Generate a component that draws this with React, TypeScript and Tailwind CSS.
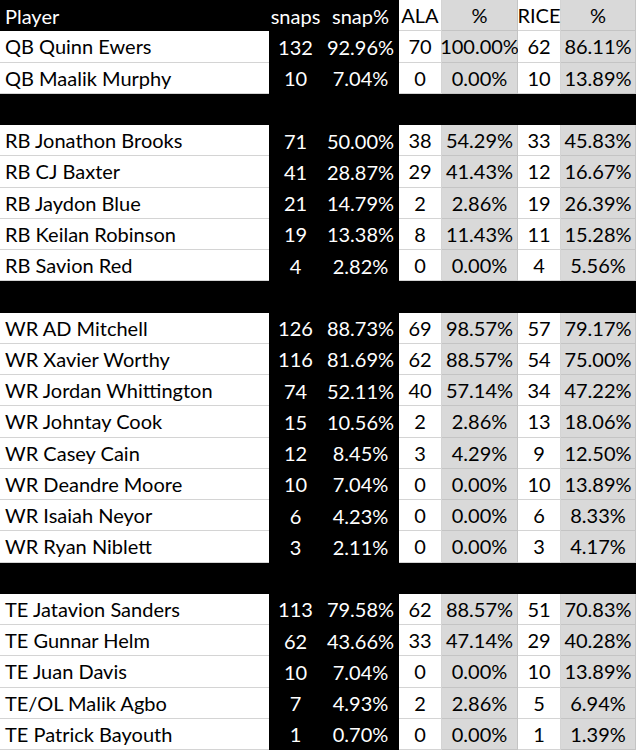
import React from "react";

type Row = [string, number, string, number, string, number, string];

const groups: Row[][] = [
  [
    ["QB Quinn Ewers", 132, "92.96%", 70, "100.00%", 62, "86.11%"],
    ["QB Maalik Murphy", 10, "7.04%", 0, "0.00%", 10, "13.89%"],
  ],
  [
    ["RB Jonathon Brooks", 71, "50.00%", 38, "54.29%", 33, "45.83%"],
    ["RB CJ Baxter", 41, "28.87%", 29, "41.43%", 12, "16.67%"],
    ["RB Jaydon Blue", 21, "14.79%", 2, "2.86%", 19, "26.39%"],
    ["RB Keilan Robinson", 19, "13.38%", 8, "11.43%", 11, "15.28%"],
    ["RB Savion Red", 4, "2.82%", 0, "0.00%", 4, "5.56%"],
  ],
  [
    ["WR AD Mitchell", 126, "88.73%", 69, "98.57%", 57, "79.17%"],
    ["WR Xavier Worthy", 116, "81.69%", 62, "88.57%", 54, "75.00%"],
    ["WR Jordan Whittington", 74, "52.11%", 40, "57.14%", 34, "47.22%"],
    ["WR Johntay Cook", 15, "10.56%", 2, "2.86%", 13, "18.06%"],
    ["WR Casey Cain", 12, "8.45%", 3, "4.29%", 9, "12.50%"],
    ["WR Deandre Moore", 10, "7.04%", 0, "0.00%", 10, "13.89%"],
    ["WR Isaiah Neyor", 6, "4.23%", 0, "0.00%", 6, "8.33%"],
    ["WR Ryan Niblett", 3, "2.11%", 0, "0.00%", 3, "4.17%"],
  ],
  [
    ["TE Jatavion Sanders", 113, "79.58%", 62, "88.57%", 51, "70.83%"],
    ["TE Gunnar Helm", 62, "43.66%", 33, "47.14%", 29, "40.28%"],
    ["TE Juan Davis", 10, "7.04%", 0, "0.00%", 10, "13.89%"],
    ["TE/OL Malik Agbo", 7, "4.93%", 2, "2.86%", 5, "6.94%"],
    ["TE Patrick Bayouth", 1, "0.70%", 0, "0.00%", 1, "1.39%"],
  ],
];

const cols = "grid grid-cols-[269px_53px_77px_43px_76px_43px_75px] h-[31.25px]";
const white = "bg-white text-black border-b border-r border-[#d4d4d4] flex items-center justify-center";
const gray = "bg-[#d9d9d9] text-black border-b border-r border-[#c4c4c4] flex items-center justify-center";
const dark = "text-white flex items-center justify-center";

function PlayerRow({ row }: { row: Row }) {
  const [name, snaps, pct, ala, alaPct, rice, ricePct] = row;
  return (
    <div className={cols}>
      <div className="bg-white text-black border-b border-[#d4d4d4] flex items-center pl-[5px]">{name}</div>
      <div className={dark}>{snaps}</div>
      <div className={dark}>{pct}</div>
      <div className={white}>{ala}</div>
      <div className={gray}>{alaPct}</div>
      <div className={white}>{rice}</div>
      <div className={gray}>{ricePct}</div>
    </div>
  );
}

export default function App() {
  return (
    <div
      className="w-[636px] h-[750px] bg-black text-[20px] leading-none overflow-hidden"
      style={{ fontFamily: "Lato, 'Open Sans', sans-serif" }}
    >
      <div className={cols}>
        <div className="text-white flex items-center pl-[5px]">Player</div>
        <div className={dark}>snaps</div>
        <div className={dark}>snap%</div>
        <div className={white}>ALA</div>
        <div className={gray}>%</div>
        <div className={white}>RICE</div>
        <div className={gray}>%</div>
      </div>
      {groups.map((g, gi) => (
        <div key={gi}>
          {gi > 0 && <div className="h-[31.25px]" />}
          {g.map((r) => (
            <PlayerRow key={r[0]} row={r} />
          ))}
        </div>
      ))}
    </div>
  );
}
